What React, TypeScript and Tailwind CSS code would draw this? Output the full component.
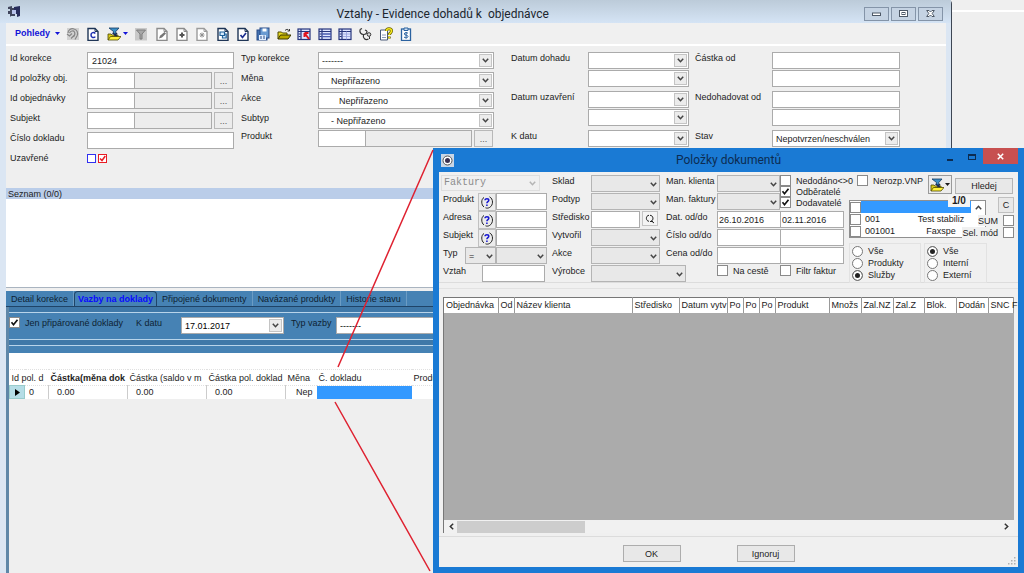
import { useId, useState } from 'react';
import type { ReactNode } from 'react';
import { clsx } from 'clsx';

type IconName =
  | 'refresh' | 'docC' | 'filterFolder' | 'funnel' | 'edit' | 'plus' | 'star' | 'copy' | 'docCheck'
  | 'save' | 'folder' | 'tableRed' | 'table' | 'tableCols' | 'steth' | 'help' | 'dollar';

function Page({ color = '#1f3556' }: { color?: string }) {
  return (
    <>
      <path d="M2 1.500h7l3 3v9h-10z" fill="#fff" stroke={color} strokeWidth="1.400" />
      <path d="M9 1.500v3h3" fill="none" stroke={color} />
    </>
  );
}

function TableShape() {
  return (
    <>
      <rect x="1" y="2" width="12" height="10.500" fill="#dfe6ff" stroke="#26357c" strokeWidth="1.200" />
      <path d="M1 4.500h12M4 2v10.500" stroke="#26357c" strokeWidth="1.200" />
      <path d="M1.600 7h2M1.600 9.500h2" stroke="#26357c" />
    </>
  );
}

const ICONS: Record<IconName, ReactNode> = {
  refresh: (
    <>
      <rect x="1" y="1" width="12" height="12" fill="#d2d2d2" />
      <path d="M2 6c0-3 3-5 6-4 3 .6 4.500 4 3 7l-2 3.500M3.500 6c1-2 4-3 5-1 1 1.500 0 3.500-1 5M1 7l2.500 2L6 6.500M5 11.500l3-3" fill="none" stroke="#868686" strokeWidth="1.200" />
    </>
  ),
  docC: (
    <>
      <Page />
      <path d="M9.300 6.500C8 4.800 5 5.300 5 8s3 3.300 4.300 1.600" fill="none" stroke="#1c2fb0" strokeWidth="1.500" />
    </>
  ),
  filterFolder: (
    <>
      <path d="M2 1h10L8.800 4.500V7H6.500V4.500z" fill="#3c8fc7" stroke="#123a63" strokeWidth=".8" />
      <path d="M1 13V7h3l1 1h6v2" fill="#d8c91a" stroke="#4c4700" strokeWidth=".8" />
      <path d="M1 13l2.500-3.500H14L11 13z" fill="#fff23c" stroke="#4c4700" strokeWidth=".8" />
      <path d="M5.500 6l4.500 3M10 6L7.500 9" stroke="#1d2b53" strokeWidth="1.300" />
    </>
  ),
  funnel: (
    <>
      <rect x="1" y="1" width="12" height="12.500" fill="#c9c9c9" />
      <path d="M2.500 3h9L8 7v5H6V7z" fill="#a8a8a8" stroke="#7d7d7d" />
    </>
  ),
  edit: (
    <>
      <Page color="#8b8b8b" />
      <path d="M4 11.500l1-2.800L9.500 5 11 6.500 7 10.500z" fill="#777" />
    </>
  ),
  plus: (
    <>
      <Page color="#8b8b8b" />
      <path d="M7 5.500v5M4.500 8h5" stroke="#555" strokeWidth="2" />
    </>
  ),
  star: (
    <>
      <Page color="#9b9b9b" />
      <path d="M7 5.500v5M4.500 8h5M5.200 6.200l3.600 3.600M8.800 6.200L5.200 9.800" stroke="#909090" />
    </>
  ),
  copy: (
    <>
      <Page />
      <path d="M4 5h4.500v3.500H4zM6.500 8.500V11h3.700V7H8.500" fill="#d7ecff" stroke="#1e5f98" strokeWidth="1.200" />
    </>
  ),
  docCheck: (
    <>
      <Page />
      <path d="M4.500 8l2 2.500L10 6" fill="none" stroke="#1c2f90" strokeWidth="1.700" />
    </>
  ),
  save: (
    <>
      <rect x="1" y="3" width="10" height="10" fill="#4472b0" stroke="#274b87" />
      <rect x="4" y="1" width="9" height="10" fill="#6a9bd2" stroke="#274b87" />
      <path d="M6.500 1.500h4v3h-4z" fill="#fff" />
      <path d="M3 8h7v5H3z" fill="#e3efff" />
      <path d="M5 9v3M8 8.500v3.500" stroke="#274b87" />
    </>
  ),
  folder: (
    <>
      <path d="M1 12V5h3.500l1 1H10v2" fill="#e8da22" stroke="#4c4700" />
      <path d="M1 12l2.500-4H14l-3 4z" fill="#b9a900" stroke="#3b3700" />
      <path d="M8 3.500c1.500-1.500 3-1.500 4 0M12.500 2v2h-2" fill="none" stroke="#222" strokeWidth=".9" />
    </>
  ),
  tableRed: (
    <>
      <TableShape />
      <path d="M7.500 6l4.500 6M7.500 6v4M7.500 6h4" stroke="#e0141e" strokeWidth="2" />
    </>
  ),
  table: (
    <>
      <TableShape />
      <path d="M4 7h9M4 9.700h9" stroke="#4a5cb0" strokeWidth="1.300" />
    </>
  ),
  tableCols: (
    <>
      <TableShape />
      <path d="M8.500 4.500v8M5 7h7M5 9.500h7" stroke="#93a0dc" strokeWidth=".8" />
    </>
  ),
  steth: (
    <>
      <path d="M2 2.500l2-1M7 3l2 1M2 2.500c-.5 3 1 5 3.500 5S9 5.500 9 4M5.500 7.500c-1 4 2 6 5 4.500" fill="none" stroke="#333" strokeWidth="1.200" />
      <circle cx="11" cy="7.500" r="1.800" fill="#ddd" stroke="#333" />
      <path d="M11.500 9.500v2.500" stroke="#333" />
    </>
  ),
  help: (
    <>
      <path d="M1.500 3h7v10h-7z" fill="#fff" stroke="#4a5a78" />
      <path d="M3 8h4M3 10.500h4" stroke="#8a99b8" />
      <path d="M7.500 4C7.500 1 12.500 1 12.500 4c0 2-2.300 2-2.300 4M10.200 9.500v2" fill="none" stroke="#6b6200" strokeWidth="3" />
      <path d="M7.500 4C7.500 1 12.500 1 12.500 4c0 2-2.300 2-2.300 4M10.200 9.700v1.600" fill="none" stroke="#f7ea1c" strokeWidth="1.600" />
    </>
  ),
  dollar: (
    <>
      <rect x="2.500" y="2" width="9" height="11.500" fill="#fff" stroke="#2b62a0" strokeWidth="1.300" />
      <path d="M5 1h4v2.500H5z" fill="#cfe0f2" stroke="#2b62a0" />
      <path d="M9 6.300C8 5.200 5.300 5.400 5.300 7S9 7.700 9 9.400s-3 1.900-4 .6M7.100 5v6.500" fill="none" stroke="#2b62a0" />
    </>
  ),
};

function Icon({ name }: { name: IconName }) {
  return (
    <svg viewBox="0 0 14 14" className="h-3.5 w-3.5 shrink-0" aria-hidden="true">
      {ICONS[name]}
    </svg>
  );
}

function Caret({ className }: { className?: string }) {
  return (
    <svg viewBox="0 0 5 3" className={clsx('h-[3px] w-[5px] shrink-0', className)} aria-hidden="true">
      <path d="M0 0h5L2.500 3z" fill="currentColor" />
    </svg>
  );
}

function Chevron({ className }: { className?: string }) {
  return (
    <svg viewBox="0 0 7 5" className={clsx('h-[5px] w-[7px]', className)} aria-hidden="true">
      <path d="M.8.8l2.700 2.900L6.200.8" fill="none" stroke="currentColor" strokeWidth="1.500" />
    </svg>
  );
}

const label = 'shrink-0 whitespace-nowrap text-[9px] leading-3';
const box = 'block h-[17px] min-w-0 border border-[#ababab] text-[9px] leading-3 outline-none';

type SelectProps = { id?: string; name?: string; value?: string; className?: string; inner?: string; flat?: boolean };

function Select({ id, name, value = '', className, inner, flat }: SelectProps) {
  return (
    <span className={clsx('relative block shrink-0', className)}>
      <select
        id={id}
        aria-label={name}
        className={clsx(
          'block h-[17px] w-full appearance-none border pr-3 text-[9px] leading-3 outline-none',
          flat ? 'border-[#b4b4b4] bg-[#e8e8e8]' : 'border-[#ababab] bg-white',
          inner ?? 'pl-[3px]',
        )}
      >
        <option>{value}</option>
      </select>
      {flat ? (
        <Chevron className="pointer-events-none absolute top-[7px] right-[3px] text-[#444]" />
      ) : (
        <span className="pointer-events-none absolute top-0.5 right-0.5 flex h-[13px] w-[13px] items-center justify-center border border-[#c4c4c4] bg-[#ececec] text-[#444]">
          <Chevron />
        </span>
      )}
    </span>
  );
}

function Check({ text, checked = false, className, reverse }: { text: string; checked?: boolean; className?: string; reverse?: boolean }) {
  const [on, setOn] = useState(checked);
  return (
    <label className={clsx('flex h-[11px] items-center gap-[5px]', reverse && 'flex-row-reverse', className)}>
      <span className="relative block h-[11px] w-[11px] shrink-0">
        <input
          type="checkbox"
          checked={on}
          onChange={(e) => setOn(e.target.checked)}
          className="block h-[11px] w-[11px] appearance-none border border-[#8a8a8a] bg-white"
        />
        {on && (
          <svg viewBox="0 0 11 11" className="pointer-events-none absolute inset-0" aria-hidden="true">
            <path d="M2.500 5.300l2 2.400 4-5" fill="none" stroke="#111" strokeWidth="1.700" />
          </svg>
        )}
      </span>
      <span className={label}>{text}</span>
    </label>
  );
}

function Field({ text, children, tight }: { text: string; children: (id: string) => ReactNode; tight?: boolean }) {
  const id = useId();
  return (
    <div className={clsx('flex', tight ? 'h-[18px]' : 'h-5')}>
      <label htmlFor={id} className={clsx(label, 'w-[77px]')}>{text}</label>
      {children(id)}
    </div>
  );
}

function PairField({ text, children }: { text: string; children: (id: string) => ReactNode }) {
  const id = useId();
  return (
    <div className="flex h-[39px]">
      <label htmlFor={id} className={clsx(label, 'w-[77px]')}>{text}</label>
      <div className="flex flex-col gap-px">{children(id)}</div>
    </div>
  );
}

function Lookup({ id, wide }: { id: string; wide?: boolean }) {
  return (
    <>
      <input id={id} className={clsx(box, 'w-12 bg-white')} />
      <input aria-label="Popis" readOnly className={clsx(box, '-ml-px bg-[#ededed]', wide ? 'w-[107px]' : 'w-[78px]')} />
      <button className="ml-0.5 h-[17px] w-[19px] border border-[#b8b8b8] bg-[#ececec] text-[9px] leading-3 text-[#555]">...</button>
    </>
  );
}

const TOOLS: IconName[] = [
  'refresh', 'docC', 'filterFolder', 'funnel', 'edit', 'plus', 'star', 'copy', 'docCheck',
  'save', 'folder', 'tableRed', 'table', 'tableCols', 'steth', 'help', 'dollar',
];

function TitleBar() {
  return (
    <header className="flex h-[23px] items-center bg-linear-to-b from-[#bccbd9] to-[#d5e4f5] pr-2 pl-2">
      <svg viewBox="0 0 13 13" className="h-[13px] w-[13px]" aria-hidden="true">
        <path d="M0 2l4-1v2h3v8H3l-1 1V9H0V6h2V4H0z" fill="#40455c" />
        <path d="M6 2l6-1v10l-3 1V9H6z" fill="#282d5c" />
        <path d="M4 5h4v4H4z" fill="#b9c3ea" />
      </svg>
      <h1 className="flex-1 pt-1 text-center font-['Roboto',sans-serif] text-xs leading-4 whitespace-pre text-[#20262e]">
        Vztahy - Evidence dohadů k  objednávce
      </h1>
      <div className="flex gap-0.5 pt-1">
        {['Minimalizovat', 'Maximalizovat', 'Zavřít'].map((name, i) => (
          <button key={name} aria-label={name} className="flex h-3.5 w-[25px] items-center justify-center border border-[#8494a8] bg-[#c5d3e3]">
            <svg viewBox="0 0 9 7" className="h-[7px] w-[9px]" aria-hidden="true" fill="#fff" stroke="#4d5866">
              {i === 0 && <rect x=".5" y="3" width="8" height="2.500" />}
              {i === 1 && (
                <>
                  <rect x=".5" y=".5" width="8" height="6" />
                  <rect x="3" y="2.500" width="3" height="2" />
                </>
              )}
              {i === 2 && <path d="M.7.500h2.300l1.500 1.500L6 .5h2.300L6.200 3.500l2.100 3H6L4.500 5 3 6.500H.7l2.100-3z" />}
            </svg>
          </button>
        ))}
      </div>
    </header>
  );
}

function Toolbar() {
  return (
    <div className="flex h-[23px] items-center border-b-2 border-white bg-[#f0f0f0] pl-[9px]">
      <button className="flex w-[51px] items-center justify-between text-[9px] font-bold text-[#1313d8]">
        Pohledy
        <Caret className="mr-1.5" />
      </button>
      <div className="flex w-[347px] justify-between">
        {TOOLS.map((name) => (
          <button key={name} aria-label={name} className="flex items-center gap-0.5 text-[#1313d8]">
            <Icon name={name} />
            {name === 'filterFolder' && <Caret />}
          </button>
        ))}
      </div>
    </div>
  );
}

function FilterForm() {
  return (
    <section className="flex h-[142px] pt-1.5 pl-1">
      <div className="w-[231px]">
        <Field text="Id korekce">{(id) => <input id={id} defaultValue="21024" className={clsx(box, 'w-[147px] bg-white px-1')} />}</Field>
        <Field text="Id položky obj.">{(id) => <Lookup id={id} />}</Field>
        <Field text="Id objednávky">{(id) => <Lookup id={id} />}</Field>
        <Field text="Subjekt">{(id) => <Lookup id={id} />}</Field>
        <Field text="Číslo dokladu">{(id) => <input id={id} className={clsx(box, 'w-[147px] bg-white')} />}</Field>
        <Field text="Uzavřené">
          {(id) => (
            <div className="flex gap-0.5 pt-0.5">
              <input id={id} type="checkbox" className="h-[9px] w-[9px] appearance-none border border-[#3030f0] bg-white" />
              <span className="relative block h-[9px] w-[9px]">
                <input type="checkbox" aria-label="Uzavřené ano" defaultChecked className="block h-[9px] w-[9px] appearance-none border border-[#e81c24] bg-white" />
                <svg viewBox="0 0 9 9" className="pointer-events-none absolute inset-0" aria-hidden="true">
                  <path d="M2 4.500l2 2L7.300 2" fill="none" stroke="#e81c24" strokeWidth="1.500" />
                </svg>
              </span>
            </div>
          )}
        </Field>
      </div>
      <div className="w-[270px]">
        <Field text="Typ korekce">{(id) => <Select id={id} value="-------" className="w-44" />}</Field>
        <Field text="Měna">{(id) => <Select id={id} value="Nepřiřazeno" className="w-44" inner="pl-3" />}</Field>
        <Field text="Akce">{(id) => <Select id={id} value="Nepřiřazeno" className="w-44" inner="pl-5" />}</Field>
        <Field text="Subtyp" tight>{(id) => <Select id={id} value="- Nepřiřazeno" className="w-44" inner="pl-3" />}</Field>
        <Field text="Produkt">{(id) => <Lookup id={id} wide />}</Field>
      </div>
      <div className="w-[184px]">
        {['Datum dohadu', 'Datum uzavření'].map((text) => (
          <PairField key={text} text={text}>
            {(id) => (
              <>
                <Select id={id} className="w-[101px]" />
                <Select name={`${text} do`} className="w-[101px]" />
              </>
            )}
          </PairField>
        ))}
        <Field text="K datu">{(id) => <Select id={id} className="w-[101px]" />}</Field>
      </div>
      <div>
        {['Částka od', 'Nedohadovat od'].map((text) => (
          <PairField key={text} text={text}>
            {(id) => (
              <>
                <input id={id} className={clsx(box, 'w-32 bg-white')} />
                <input aria-label={`${text} do`} className={clsx(box, 'w-32 bg-white')} />
              </>
            )}
          </PairField>
        ))}
        <Field text="Stav">{(id) => <Select id={id} value="Nepotvrzen/neschválen" className="w-32" />}</Field>
      </div>
    </section>
  );
}

const TABS = ['Detail korekce', 'Vazby na doklady', 'Připojené dokumenty', 'Navázané produkty', 'Historie stavu'];

function Details() {
  const [tab, setTab] = useState('Vazby na doklady');
  return (
    <section className="mt-[3px] flex flex-1 flex-col">
      <div role="tablist" className="flex h-4 border-b border-[#1f4468] bg-[#4682b4]">
        {TABS.map((name) => (
          <button
            key={name}
            role="tab"
            aria-selected={name === tab}
            onClick={() => setTab(name)}
            className={clsx(
              label,
              'h-[15px]',
              name === tab
                ? 'rounded-t-sm border-x border-t border-[#1f4468] px-[3px] font-bold text-[#0a0aff]'
                : 'border-r border-[#6b9cc4] px-[5px] text-[#0e2233]',
            )}
          >
            {name}
          </button>
        ))}
      </div>
      <div className="flex flex-1 flex-col border-l-[3px] border-[#5f87a8]">
        <div className="h-1.5 border-b border-[#b8d4ea] bg-[#3f78a8]" />
        <div className="flex h-[26px] bg-[#4682b4] pt-1 text-[#0e2233]">
          <Check text="Jen připárované doklady" checked className="w-[127px]" />
          <label htmlFor="kdatu" className={clsx(label, 'w-[45px]')}>K datu</label>
          <Select id="kdatu" value="17.01.2017" className="w-[103px] text-black" />
          <label htmlFor="typvazby" className={clsx(label, 'w-[52px] pl-[7px]')}>Typ vazby</label>
          <Select id="typvazby" value="-------" className="w-44 text-black" />
        </div>
        <div className="h-[7px] border-y border-[#b8d4ea] bg-[#3f78a8]" />
        <div className="h-[7px] bg-[#4682b4]" />
        <div className="h-4 bg-white" />
        <table className={clsx(label, 'w-full table-fixed border-collapse bg-white text-left')}>
          <colgroup>
            <col className="w-[15px]" />
            <col className="w-6" />
            <col className="w-[79px]" />
            <col className="w-[79px]" />
            <col className="w-[79px]" />
            <col className="w-[31px]" />
            <col className="w-[95px]" />
            <col />
          </colgroup>
          <thead>
            <tr className="h-4 border-y border-dotted border-[#e0e0e0]">
              <th colSpan={2} className="pl-0.5 font-normal">Id pol. d</th>
              <th className="pl-0.5 font-bold">Částka(měna dok</th>
              <th className="pl-0.5 font-normal">Částka (saldo v m</th>
              <th className="pl-0.5 font-normal">Částka pol. doklad</th>
              <th className="pl-0.5 font-normal">Měna</th>
              <th className="pl-0.5 font-normal">Č. dokladu</th>
              <th className="pl-0.5 font-normal">Produkt</th>
            </tr>
          </thead>
          <tbody>
            <tr className="h-[13px]">
              <td className="border border-[#9cc] bg-[#b5dde6]">
                <svg viewBox="0 0 5 7" className="mx-auto h-[7px] w-[5px]" aria-hidden="true">
                  <path d="M0 0l5 3.500L0 7z" />
                </svg>
              </td>
              <td className="border-r border-[#ccc] pl-1">0</td>
              <td className="border-r border-[#ccc] pl-2">0.00</td>
              <td className="border-r border-[#ccc] pl-2">0.00</td>
              <td className="border-r border-[#ccc] pl-2">0.00</td>
              <td className="pr-1 text-right">Nep</td>
              <td className="bg-[#3399ff]" />
              <td />
            </tr>
          </tbody>
        </table>
      </div>
    </section>
  );
}

function DField({ text, w, children }: { text: string; w: string; children: (id: string) => ReactNode }) {
  const id = useId();
  return (
    <div className="flex h-[18px]">
      <label htmlFor={id} className={clsx(label, w)}>{text}</label>
      {children(id)}
    </div>
  );
}

function AskButton() {
  return (
    <button aria-label="Vyhledat" className="flex h-[18px] w-[18px] shrink-0 items-center justify-center border border-[#c0c0c0] bg-[#ececec]">
      <svg viewBox="0 0 14 14" className="h-3.5 w-3.5" aria-hidden="true">
        <path d="M4 2.500C1 4 1 10 4 12M9.500 1.800c4 2 4 8.500 0 10.700-1.500.8-3 .8-4 .3" fill="none" stroke="#222" />
        <path d="M5 5.300C5 3.300 8.800 3.300 8.800 5.300c0 1.400-1.900 1.400-1.900 3M6.900 9.500v1.500" fill="none" stroke="#1515d0" strokeWidth="1.500" />
      </svg>
    </button>
  );
}

function RadioGroup({ name, options, value, className }: { name: string; options: string[]; value: string; className: string }) {
  return (
    <fieldset className={clsx('flex flex-col justify-between border border-[#e2e2e2] py-px pl-0.5', className)}>
      {options.map((option) => (
        <label key={option} className="flex items-center gap-[5px]">
          <input
            type="radio"
            name={name}
            defaultChecked={option === value}
            className="h-[11px] w-[11px] appearance-none rounded-full border border-[#777] bg-white checked:bg-[#222] checked:shadow-[inset_0_0_0_2px_white]"
          />
          <span className={label}>{option}</span>
        </label>
      ))}
    </fieldset>
  );
}

function DialogForm() {
  return (
    <div className="flex h-[111px] shrink-0 border-b border-[#dcdcdc] pt-[3px] pl-1">
      <div className="w-[109px]">
        <div className="relative -ml-0.5 h-[18px]">
          <select
            aria-label="Typ dokladu"
            disabled
            className="block h-4 w-[99px] appearance-none border border-[#dedede] pl-0.5 font-['Liberation_Mono',monospace] text-[10px] leading-3 text-[#8c8c8c] opacity-100"
          >
            <option>Faktury</option>
          </select>
          <Chevron className="absolute top-1.5 left-[88px] text-[#b4b4b4]" />
        </div>
        {['Produkt', 'Adresa', 'Subjekt'].map((text) => (
          <DField key={text} text={text} w="w-[35px]">
            {(id) => (
              <>
                <AskButton />
                <input id={id} className={clsx(box, 'w-[51px] bg-white')} />
              </>
            )}
          </DField>
        ))}
        <DField text="Typ" w="w-[22px]">
          {(id) => (
            <>
              <Select flat id={id} value="=" className="w-[31px]" />
              <Select flat name="Hodnota typu" className="w-[51px]" />
            </>
          )}
        </DField>
        <DField text="Vztah" w="w-[39px]">{(id) => <input id={id} className={clsx(box, 'w-[63px] bg-white')} />}</DField>
      </div>
      <div className="w-[114px]">
        <DField text="Sklad" w="w-[39px]">{(id) => <Select flat id={id} className="w-[69px]" />}</DField>
        <DField text="Podtyp" w="w-[39px]">{(id) => <Select flat id={id} className="w-[69px]" />}</DField>
        <DField text="Středisko" w="w-[39px]">
          {(id) => (
            <>
              <input id={id} className={clsx(box, 'w-[49px] bg-white')} />
              <button aria-label="Hledat středisko" className="ml-0.5 flex h-[15px] w-4 items-center justify-center border border-[#c4c4c4] bg-[#f4f4f4]">
                <svg viewBox="0 0 10 10" className="h-2.5 w-2.5" aria-hidden="true" fill="none" stroke="#222">
                  <path d="M4 7.300C.500 7 .500 1.500 4 1.300M5 1.300c3.500 0 4 5 1 6M6.500 7l2.500 2M5 7.500h3" />
                </svg>
              </button>
            </>
          )}
        </DField>
        <DField text="Vytvořil" w="w-[39px]">{(id) => <Select flat id={id} className="w-[69px]" />}</DField>
        <DField text="Akce" w="w-[39px]">{(id) => <Select flat id={id} className="w-[69px]" />}</DField>
        <DField text="Výrobce" w="w-[39px]">{(id) => <Select flat id={id} className="w-[95px]" />}</DField>
      </div>
      <div className="w-[183px]">
        <div className="flex h-9">
          <div className="w-[116px]">
            <DField text="Man. klienta" w="w-[51px]">{(id) => <Select flat id={id} className="w-[63px]" />}</DField>
            <DField text="Man. faktury" w="w-[51px]">{(id) => <Select flat id={id} className="w-[63px]" />}</DField>
          </div>
          <div>
            <Check text="Nedodáno<>0" />
            <Check text="Odběratelé" checked />
            <Check text="Dodavatelé" checked />
          </div>
        </div>
        {[
          ['Dat. od/do', '26.10.2016', '02.11.2016'],
          ['Číslo od/do', '', ''],
          ['Cena od/do', '', ''],
        ].map(([text, from, to]) => (
          <DField key={text} text={text} w="w-[51px]">
            {(id) => (
              <>
                <input id={id} defaultValue={from} className={clsx(box, 'w-16 bg-white px-px')} />
                <input aria-label={`${text} konec`} defaultValue={to} className={clsx(box, '-ml-px w-16 bg-white px-px')} />
              </>
            )}
          </DField>
        ))}
        <div className="flex pl-[51px]">
          <Check text="Na cestě" className="w-[63px]" />
          <Check text="Filtr faktur" />
        </div>
      </div>
      <div className="w-[165px]">
        <div className="relative flex h-[25px] items-start">
          <Check text="Nerozp.VNP" className="ml-2 w-[71px]" />
          <button aria-label="Filtr" className="flex h-[19px] w-6 items-center justify-between border border-[#9a9a9a] bg-[#ececec] px-px">
            <Icon name="filterFolder" />
            <Caret />
          </button>
          <button className={clsx(label, 'mt-[3px] ml-[3px] h-4 w-[58px] border border-[#b4b4b4] bg-[#e8e8e8]')}>Hledej</button>
          <span className="absolute top-5 left-[99px] z-10 bg-[#f4f4f4] px-1 text-[10px] leading-3 font-bold">1/0</span>
        </div>
        <div className="flex h-[43px]">
          <ul className="h-[38px] w-[137px] border border-[#8f8f8f] bg-white">
            {[
              ['', ''],
              ['001', 'Test stabiliz'],
              ['001001', 'Faxspe'],
            ].map(([code, name], i) => (
              <li key={i} className="flex h-3 items-center">
                <input type="checkbox" aria-label={code || 'Prázdné'} className="h-[11px] w-[11px] shrink-0 appearance-none border border-[#8a8a8a] bg-white" />
                <span className={clsx('flex h-full w-[110px] justify-between pl-1', i === 0 && 'bg-[#3399ff]')}>
                  <span className={label}>{code}</span>
                  <span className={clsx(label, 'w-[60px] text-center')}>{name}</span>
                </span>
                {i === 0 && <Chevron className="ml-1 rotate-180 text-[#444]" />}
              </li>
            ))}
          </ul>
          <div className="relative -ml-6 flex flex-1 flex-col items-end">
            <button className={clsx(label, '-mt-[3px] mb-0.5 h-4 w-4 border border-[#c0c0c0] bg-[#e8e8e8]')}>C</button>
            <Check text="SUM" reverse className="bg-[#f0f0f0]" />
            <Check text="Sel. mód" reverse className="mt-px bg-[#f0f0f0]" />
          </div>
        </div>
        <div className="flex h-10 gap-[3px]">
          <RadioGroup name="druh" options={['Vše', 'Produkty', 'Služby']} value="Služby" className="w-[72px]" />
          <RadioGroup name="puvod" options={['Vše', 'Interní', 'Externí']} value="Vše" className="w-[63px]" />
        </div>
      </div>
    </div>
  );
}

function ResultGrid() {
  return (
    <div className="mx-1 mt-2 flex flex-1 flex-col border-l border-[#777] bg-[#ababab]">
      <table className="w-full table-fixed border-collapse border-t border-[#777] bg-white text-left text-[9px] leading-3">
        <colgroup>
          <col className="w-[54px]" />
          <col className="w-4" />
          <col className="w-[118px]" />
          <col className="w-[47px]" />
          <col className="w-12" />
          <col className="w-4" />
          <col className="w-4" />
          <col className="w-4" />
          <col className="w-[54px]" />
          <col className="w-8" />
          <col className="w-8" />
          <col className="w-[31px]" />
          <col className="w-8" />
          <col className="w-8" />
          <col />
        </colgroup>
        <thead>
          <tr className="h-[15px]">
            {['Objednávka', 'Od', 'Název klienta', 'Středisko', 'Datum vytv', 'Po', 'Po', 'Po', 'Produkt', 'Množs', 'Zal.NZ', 'Zal.Z', 'Blok.', 'Dodán', 'SNC F'].map((name, i) => (
              <th key={i} className="border-r border-[#999] pl-0.5 font-normal whitespace-nowrap">{name}</th>
            ))}
          </tr>
        </thead>
      </table>
      <div className="flex-1" />
      <div className="flex h-[13px] items-center bg-[#f1f1f1] px-1 text-[#333]">
        <Chevron className="rotate-90" />
        <div className="ml-0.5 h-3 w-32 bg-[#cdcdcd]" />
        <Chevron className="ml-auto -rotate-90" />
      </div>
    </div>
  );
}

function Dialog() {
  return (
    <div role="dialog" aria-labelledby="dlg-title" className="absolute top-[148px] right-0 bottom-0 left-[433px] flex flex-col bg-[#1a7ad4] px-1.5 pb-1.5">
      <header className="flex h-6 shrink-0 items-center">
        <svg viewBox="0 0 13 13" className="ml-0.5 h-[13px] w-[13px]" aria-hidden="true">
          <rect width="13" height="13" fill="#c9d6e6" />
          <circle cx="6.500" cy="6.500" r="4.500" fill="#fff" stroke="#555" />
          <circle cx="6.500" cy="6.500" r="2.500" fill="#3a2f4f" />
        </svg>
        <h2 id="dlg-title" className="flex-1 pl-16 text-center font-['Roboto',sans-serif] text-xs leading-4 text-[#0c2c52]">Položky dokumentů</h2>
        <button aria-label="Minimalizovat" className="flex h-5 w-[22px] items-center justify-center">
          <span className="h-0.5 w-1.5 bg-[#0c2c52]" />
        </button>
        <button aria-label="Maximalizovat" className="flex h-5 w-[22px] items-center justify-center pb-1.5">
          <span className="h-1.5 w-2 border border-t-2 border-[#0c2c52]" />
        </button>
        <button aria-label="Zavřít" className="mb-2 flex h-4 w-[35px] items-center justify-center bg-[#c75050]">
          <svg viewBox="0 0 7 7" className="h-[7px] w-[7px]" aria-hidden="true">
            <path d="M.8.8l5.400 5.400M6.200.8L.8 6.200" stroke="#fff" strokeWidth="1.500" />
          </svg>
        </button>
      </header>
      <div className="flex flex-1 flex-col overflow-hidden bg-[#f0f0f0]">
        <DialogForm />
        <div className="h-1.5 shrink-0 border-b border-[#e2e2e2]" />
        <ResultGrid />
        <footer className="relative mt-[3px] flex h-[31px] shrink-0 justify-center gap-14 border-t border-[#dcdcdc] pt-2 pr-10">
          <button className={clsx(label, 'h-[17px] w-[58px] border border-[#adadad] bg-[#e8e8e8]')}>OK</button>
          <button className={clsx(label, 'h-[17px] w-[58px] border border-[#adadad] bg-[#e8e8e8]')}>Ignoruj</button>
          <svg viewBox="0 0 8 8" className="absolute right-0.5 bottom-0.5 h-2 w-2" fill="#b0b0b0" aria-hidden="true">
            <path d="M6 0h1.500v1.500H6zM6 3h1.500v1.500H6zM6 6h1.500v1.500H6zM3 3h1.500v1.500H3zM3 6h1.500v1.500H3zM0 6h1.500v1.500H0z" />
          </svg>
        </footer>
      </div>
    </div>
  );
}

export default function App() {
  return (
    <div className="relative flex h-screen overflow-hidden bg-[#efefef] font-['Liberation_Sans',Arial,sans-serif] text-[#1c1c1c]">
      <main className="flex w-[93%] flex-col rounded-tr border-r border-[#3d4654] bg-[#dbe6f3]">
        <TitleBar />
        <div className="mr-[5px] ml-1.5 flex flex-1 flex-col bg-[#efefef]">
          <Toolbar />
          <FilterForm />
          <h3 className={clsx(label, 'h-[11px] bg-[#bacde9] pl-0.5')}>Seznam (0/0)</h3>
          <div className="h-[89px] border-b border-[#a9b4c0] bg-white" />
          <Details />
        </div>
      </main>
      <div className="h-3 flex-1 border-b-2 border-white" />
      <Dialog />
      <svg className="pointer-events-none absolute top-0 left-0 h-[573px] w-[440px]" aria-hidden="true">
        <path d="M433 150L338 367M335 402l95 169" stroke="#df2231" strokeWidth="1.500" />
      </svg>
    </div>
  );
}
